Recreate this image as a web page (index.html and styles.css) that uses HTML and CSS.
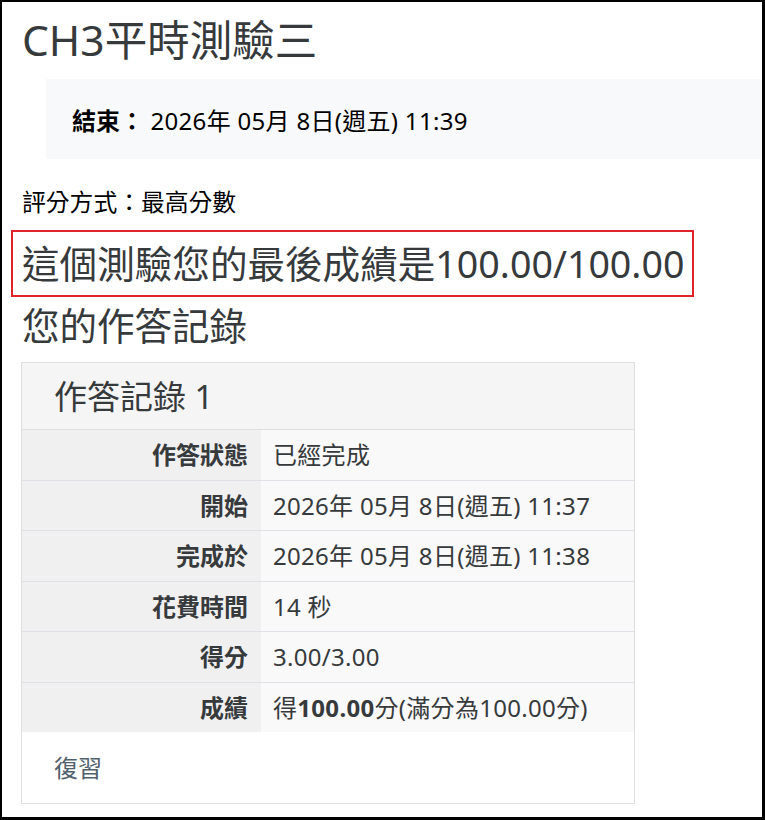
FILE: index.html
```html
<!DOCTYPE html>
<html lang="zh-Hant">
<head>
<meta charset="utf-8">
<title>CH3平時測驗三</title>
<link rel="stylesheet" href="styles.css">
</head>
<body>
<div class="frame">
  <div class="page">
    <h2 class="title">CH3平時測驗三</h2>
    <div class="timebox">
      <span class="label">結束：</span> 2026年 05月 8日(週五) 11:39
    </div>
    <p class="method">評分方式：最高分數</p>
    <div class="final"><h3 class="final-text">這個測驗您的最後成績是100.00/100.00</h3></div>
    <h3 class="section">您的作答記錄</h3>
    <div class="card">
      <div class="card-head">作答記錄 1</div>
      <table class="summary">
        <tbody>
          <tr><th>作答狀態</th><td>已經完成</td></tr>
          <tr><th>開始</th><td>2026年 05月 8日(週五) 11:37</td></tr>
          <tr><th>完成於</th><td>2026年 05月 8日(週五) 11:38</td></tr>
          <tr><th>花費時間</th><td>14 秒</td></tr>
          <tr><th>得分</th><td>3.00/3.00</td></tr>
          <tr><th>成績</th><td>得<b>100.00</b>分(滿分為100.00分)</td></tr>
        </tbody>
      </table>
      <div class="card-foot"><a class="review" href="#">復習</a></div>
    </div>
  </div>
</div>
</body>
</html>
```

FILE: styles.css
```css
html, body {
  margin: 0;
  padding: 0;
  background: #fff;
}
body {
  font-family: "Noto Sans", "Noto Sans CJK TC", sans-serif;
  color: #1d2125;
}
.frame {
  box-sizing: border-box;
  width: 765px;
  height: 820px;
  border-style: solid;
  border-color: #000;
  border-width: 2px 3px 3px 2px;
  overflow: hidden;
}
.page {
  padding-left: 20px;
}
.title {
  margin: 0;
  padding-top: 13px;
  font-size: 42.5px;
  line-height: 50px;
  font-weight: 400;
  color: #373a3c;
}
.timebox {
  margin: 14px 0 0 24px;
  height: 80px;
  box-sizing: border-box;
  padding: 25px 26px 0;
  background: #f8f9fa;
  font-size: 24px;
  line-height: 34px;
  letter-spacing: 0.3px;
  color: #000;
  white-space: nowrap;
}
.label {
  font-weight: 700;
  letter-spacing: 0;
}
.method {
  margin: 26px 0 0;
  font-size: 23.8px;
  line-height: 34px;
  color: #000;
}
.final {
  display: inline-block;
  margin: 11px 0 0 -11px;
  border: 2px solid #e0242a;
  padding: 0 8px 0 9px;
}
.final-text {
  margin: 0;
  font-size: 37.6px;
  line-height: 63px;
  font-weight: 400;
  color: #373a3c;
  white-space: nowrap;
}
.section {
  margin: 6px 0 0;
  font-size: 37.5px;
  line-height: 45px;
  font-weight: 400;
  color: #373a3c;
}
.card {
  margin: 14px 0 0 -1px;
  width: 614px;
  box-sizing: border-box;
  border: 1px solid #dfdfdf;
  background: #fff;
}
.card-head {
  padding: 12px 32px 10px;
  font-size: 33px;
  line-height: 44px;
  color: #373a3c;
  background: #f5f5f5;
  border-bottom: 1px solid #dfdfdf;
}
.summary {
  width: 100%;
  border-collapse: collapse;
  font-size: 24px;
  color: #373a3c;
}
.summary tr + tr th,
.summary tr + tr td {
  border-top: 1px solid #dee2e6;
}
.summary th {
  width: 239px;
  box-sizing: border-box;
  padding: 8px 13px 8px 0;
  line-height: 33.5px;
  text-align: right;
  font-weight: 700;
  background: #f0f0f0;
  white-space: nowrap;
}
.summary td {
  padding: 8px 0 8px 12px;
  line-height: 33.5px;
  text-align: left;
  letter-spacing: 0.3px;
  background: #f9f9f9;
  white-space: nowrap;
}
.summary b {
  font-weight: 700;
}
.card-foot {
  padding: 19px 32px 18px;
  font-size: 24px;
  line-height: 34px;
}
.review {
  color: #52606d;
  text-decoration: none;
}
```
